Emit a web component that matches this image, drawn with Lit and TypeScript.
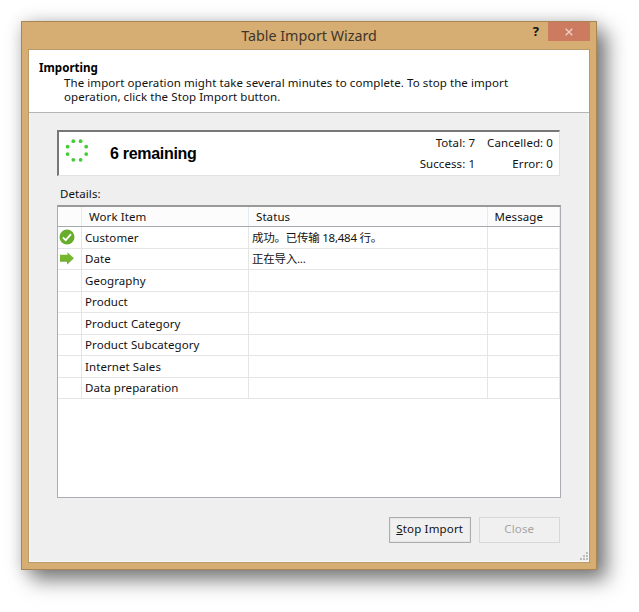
import { LitElement, html, css, svg } from "lit";
import { customElement } from "lit/decorators.js";

const rows = [
  { item: "Customer", status: "成功。已传输 18,484 行。", state: "done" },
  { item: "Date", status: "正在导入...", state: "active" },
  { item: "Geography" },
  { item: "Product" },
  { item: "Product Category" },
  { item: "Product Subcategory" },
  { item: "Internet Sales" },
  { item: "Data preparation" },
];

const dots = [[9.3, 2.2], [16.6, 2.2], [22.2, 7.7], [22.2, 15.1], [16.6, 20.8], [9.3, 20.8], [3.6, 15.1], [3.6, 7.7]];
const grip = [[6, 0], [3, 3], [6, 3], [0, 6], [3, 6], [6, 6]];

const doneIcon = html`<svg width="16" height="16" viewBox="0 0 16 16">
  <circle cx="8" cy="8" r="7.5" fill="#67ac2b" />
  <path d="M3.8 8.3 6.7 11.1 12 5.2" fill="none" stroke="#fff" stroke-width="1.8" />
</svg>`;
const activeIcon = html`<svg width="16" height="16" viewBox="0 0 16 16">
  <path d="M1 4.8H8.5V2.2L14.6 8 8.5 13.8V11.2H1Z" fill="#76b82c" />
  <path d="M1 11.2H8.5V13.8L14.6 8" fill="none" stroke="#5c9b2a" stroke-width=".8" />
</svg>`;

@customElement("app-root")
export class AppRoot extends LitElement {
  static styles = css`
    :host {
      display: block;
      box-sizing: border-box;
      width: 639px;
      height: 612px;
      padding: 21px 0 0 21px;
      overflow: hidden;
      background: #fff;
      color: #111;
      font: 11.5px/14px "Noto Sans", "Noto Sans CJK SC", sans-serif;
      letter-spacing: 0.08px;
      white-space: nowrap;
    }
    * { box-sizing: border-box; }
    svg { display: block; flex: none; }
    .window {
      display: flex;
      flex-direction: column;
      width: 576px;
      height: 549px;
      padding: 0 6px 6px;
      border: 1px solid #a98556;
      background: #d6ad72;
      box-shadow: 10px 10px 19px rgba(0, 0, 0, 0.5), 0 0 15px rgba(0, 0, 0, 0.16);
    }
    .titlebar {
      display: grid;
      grid-template-columns: 66px 1fr 66px;
      height: 27px;
      flex: none;
    }
    .title {
      grid-column: 2;
      padding-top: 4px;
      text-align: center;
      font-size: 14.3px;
      line-height: 20px;
      letter-spacing: 0;
      color: #40352a;
    }
    .controls { display: flex; }
    .help {
      width: 24px;
      padding-top: 1px;
      text-align: center;
      font: bold 13px/16px "Noto Sans", sans-serif;
      color: #111;
    }
    .x {
      display: grid;
      place-items: center;
      width: 42px;
      height: 19px;
      background: #cc7b60;
    }
    .client {
      display: flex;
      flex-direction: column;
      flex: 1;
      border: 1px solid #bb9968;
      background: #efefef;
      box-shadow: inset 0 0 0 1px #f8f8f8;
    }
    .intro {
      height: 63px;
      flex: none;
      padding: 10px 10px 0 10px;
      border-bottom: 1px solid #b5b5b5;
      background: #fff;
    }
    .heading { font-weight: bold; font-size: 11.6px; line-height: 16px; letter-spacing: 0; color: #000; }
    .text { padding-left: 25px; line-height: 14px; }
    .body {
      display: flex;
      flex-direction: column;
      flex: 1;
      padding: 17px 28px 0 28px;
    }
    .summary {
      display: flex;
      width: 503px;
      height: 46px;
      flex: none;
      padding: 0 6px 0 5px;
      border: solid;
      border-width: 2px 1px 1px 2px;
      border-color: #777 #e2e2e2 #e2e2e2 #777;
      background: #fff;
    }
    .spinner { margin-top: 7px; }
    .remaining {
      flex: 1;
      padding: 11px 0 0 21px;
      font: bold 16px/22px "Liberation Sans", sans-serif;
      letter-spacing: -0.3px;
      color: #000;
    }
    .counts {
      display: grid;
      grid-template-columns: auto auto;
      grid-auto-rows: 21px;
      column-gap: 12px;
      justify-items: end;
      line-height: 21px;
    }
    .label { margin: 11px 0 4px 3px; line-height: 14px; }
    .table {
      width: 504px;
      height: 293px;
      flex: none;
      border: 1px solid #aaadb2;
      border-top: 2px solid #999;
      background: #fff;
    }
    .row {
      display: grid;
      grid-template-columns: 24px 167px 238.5px 1fr;
      height: 21.45px;
      line-height: 21px;
    }
    .cell {
      border-right: 1px solid #e5e5e5;
      border-bottom: 1px solid #e5e5e5;
      padding-left: 3px;
    }
    .status { letter-spacing: -0.25px; }
    .icon { padding: 2px 0 0 1px; }
    .head { height: 20px; line-height: 19px; background: #fcfcfc; border-bottom: 1px solid #a5a9ae; }
    .head .cell { border-bottom: 0; border-color: #e5ebf2; padding-left: 7px; }
    .buttons {
      display: flex;
      gap: 8px;
      margin-top: 19px;
      padding-left: 332px;
    }
    .button {
      width: 81.5px;
      height: 26px;
      flex: none;
      padding: 0 0 2px;
      border: 1px solid #adadad;
      background: #f0f0f0;
      box-shadow: inset 0 0 0 1px #e6e6e6;
      color: #111;
      font: inherit;
      line-height: 22px;
      letter-spacing: 0.16px;
    }
    .button:disabled { border-color: #d8d8d8; box-shadow: none; color: #a5a5a5; }
    .grip { margin: auto -27px 2px auto; }
  `;

  render() {
    return html`
      <div class="window">
        <div class="titlebar">
          <div class="title">Table Import Wizard</div>
          <div class="controls">
            <span class="help">?</span>
            <span class="x"><svg width="8" height="8" viewBox="0 0 8 8"><path d="M.7.7 7.3 7.3M7.3.7.7 7.3" stroke="#efd3c8" stroke-width="1.3" /></svg></span>
          </div>
        </div>
        <div class="client">
          <div class="intro">
            <div class="heading">Importing</div>
            <div class="text">The import operation might take several minutes to complete. To stop the import<br />operation, click the Stop Import button.</div>
          </div>
          <div class="body">
            <div class="summary">
              <svg class="spinner" width="25" height="23" viewBox="0 0 25 23">
                ${dots.map(([x, y]) => svg`<circle cx=${x} cy=${y} r="1.9" fill="#43cb38" />`)}
              </svg>
              <div class="remaining">6 remaining</div>
              <div class="counts">
                <span>Total: 7</span><span>Cancelled: 0</span>
                <span>Success: 1</span><span>Error: 0</span>
              </div>
            </div>
            <div class="label">Details:</div>
            <div class="table">
              <div class="row head">
                <div class="cell"></div><div class="cell">Work Item</div><div class="cell">Status</div><div class="cell">Message</div>
              </div>
              ${rows.map((r) => html`<div class="row">
                <div class="cell icon">${r.state === "done" ? doneIcon : r.state === "active" ? activeIcon : ""}</div>
                <div class="cell">${r.item}</div>
                <div class="cell status">${r.status ?? ""}</div>
                <div class="cell"></div>
              </div>`)}
            </div>
            <div class="buttons">
              <button class="button"><u>S</u>top Import</button>
              <button class="button" disabled>Close</button>
            </div>
            <svg class="grip" width="8" height="8" viewBox="0 0 8 8">
              ${grip.map(([x, y]) => svg`<rect x=${x} y=${y} width="2" height="2" fill="#bdbdbd" />`)}
            </svg>
          </div>
        </div>
      </div>
    `;
  }
}
